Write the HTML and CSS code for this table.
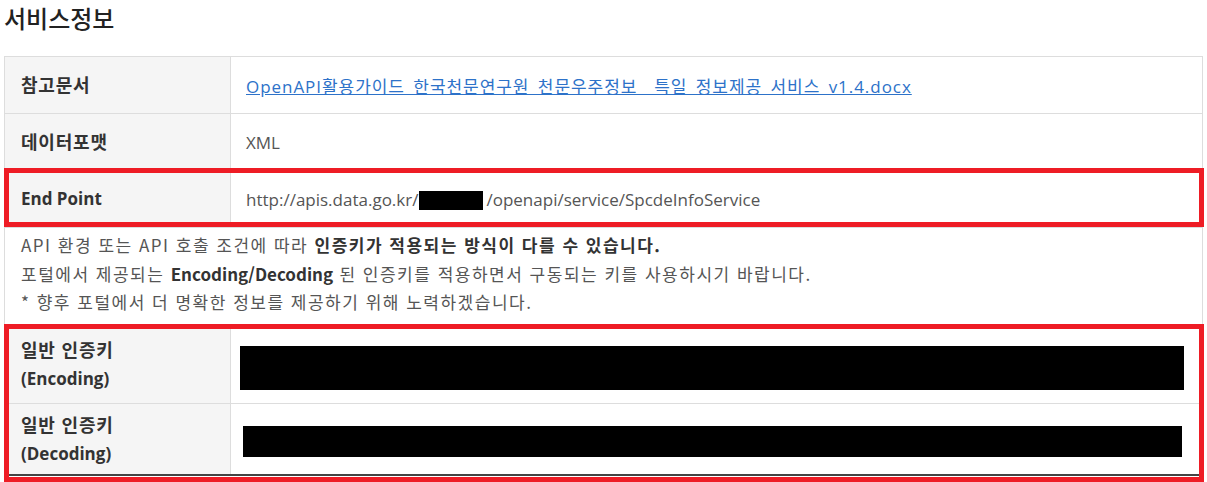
FILE: index.html
```html
<!DOCTYPE html>
<html lang="ko">
    <head>
        <meta charset="utf-8">
        <title>서비스정보</title>
        <link rel="stylesheet" href="styles.css">
    </head>
    <body>
        <div class="page">
            <h2 class="title">서비스정보</h2>

            <table class="info">
                <tr class="row">
                    <th><span class="ko">참고문서</span></th>
                    <td><a href="#">OpenAPI활용가이드_한국천문연구원_천문우주정보__특일_정보제공_서비스_v1.4.docx</a></td>
                </tr>
                <tr class="row">
                    <th><span class="ko">데이터포맷</span></th>
                    <td>XML</td>
                </tr>
                <tr class="row">
                    <th>End Point</th>
                    <td>http://apis.data.go.kr/<span class="mask-inline"></span>/openapi/service/SpcdeInfoService</td>
                </tr>
                <tr class="notice">
                    <td colspan="2">
                        API 환경 또는 API 호출 조건에 따라 <b>인증키가 적용되는 방식이 다를 수 있습니다.</b><br>
                        포털에서 제공되는 <b class="latin">Encoding/Decoding</b> 된 인증키를 적용하면서 구동되는 키를 사용하시기 바랍니다.<br>
                        * 향후 포털에서 더 명확한 정보를 제공하기 위해 노력하겠습니다.
                    </td>
                </tr>
                <tr class="key key-enc">
                    <th><span class="ko">일반 인증키</span><br>(Encoding)</th>
                    <td><div class="mask mask-enc"></div></td>
                </tr>
                <tr class="key key-dec">
                    <th><span class="ko">일반 인증키</span><br>(Decoding)</th>
                    <td><div class="mask mask-dec"></div></td>
                </tr>
            </table>

            <!-- red highlight boxes drawn over the table -->
            <div class="mark mark-endpoint"></div>
            <div class="mark mark-keys"></div>
        </div>
    </body>
</html>
```

FILE: styles.css
```css
body {
    margin: 0;
    background-color: #ffffff;
    font-family: "Open Sans", "Noto Sans CJK KR", sans-serif;
    color: #333333;
}
.page {
    position: relative;
    padding-left: 4px;
    height: 482px;
    overflow: hidden;
}
.title {
    margin: 0;
    margin-bottom: 20px;
    height: 36px;
    line-height: 36px;
    font-family: "Noto Sans CJK KR", sans-serif;
    font-size: 24px;
    font-weight: 500;
    color: #222222;
}
.info {
    width: 1199px;
    border-collapse: collapse;
    border: 1px solid #dddddd;
    border-bottom: 2px solid #444444;
    font-size: 17px;
}
.info th {
    width: 208px;
    padding-left: 16px;
    text-align: left;
    font-family: "Open Sans", "Noto Sans CJK KR", sans-serif;
    font-size: 17px;
    font-weight: 700;
    color: #333333;
    background-color: #f5f5f5;
    border-right: 1px solid #dddddd;
    line-height: 28px;
}
.info th .ko {
    font-family: "Noto Sans CJK KR", sans-serif;
    font-size: 18px;
    letter-spacing: 0.8px;
}
.info td {
    padding-left: 15px;
    color: #555555;
    font-size: 17px;
}
.row {
    height: 57px;
    border-bottom: 1px solid #dddddd;
}
.info a {
    color: #2d72c9;
    text-decoration: underline;
    letter-spacing: 0.95px;
}
.mask-inline {
    display: inline-block;
    width: 64px;
    height: 19px;
    margin-left: 1px;
    margin-right: 3px;
    vertical-align: -4px;
    background-color: #000000;
}
.notice td {
    padding: 3px 16px 9px 16px;
    line-height: 28.5px;
    color: #555555;
    font-family: "Noto Sans CJK KR", sans-serif;
    font-size: 17px;
    letter-spacing: 1.5px;
}
.notice b {
    color: #333333;
}
.notice .latin {
    letter-spacing: 0;
}
.key {
    border-bottom: 1px solid #dddddd;
}
.key-enc {
    height: 78px;
}
.key-dec {
    height: 71px;
}
.mask {
    background-color: #000000;
}
.mask-enc {
    width: 944px;
    height: 44px;
    margin-left: -6px;
    margin-top: 8px;
}
.mask-dec {
    width: 939px;
    height: 31px;
    margin-left: -3px;
    margin-top: 6px;
}
.mark {
    position: absolute;
    left: 4px;
    width: 1190px;
    border: 5px solid #ee1c25;
}
.mark-endpoint {
    top: 168px;
    height: 49px;
}
.mark-keys {
    top: 324px;
    height: 148px;
}
```
